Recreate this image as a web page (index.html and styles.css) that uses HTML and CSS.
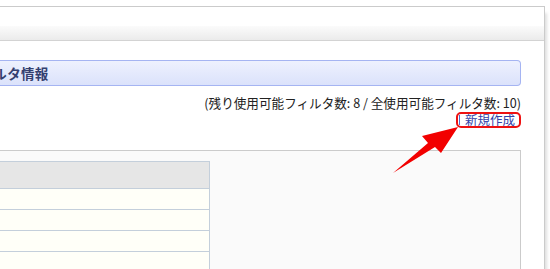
FILE: index.html
```html
<!DOCTYPE html>
<html lang="ja">
<head>
    <meta charset="UTF-8">
    <title>フィルタ情報</title>
    <link rel="stylesheet" href="styles.css">
</head>
<body>
    <div class="frame">
        <div class="topbar"></div>
        <div class="tabbar"></div>
        <div class="content">
            <h2 class="section-title"><span>フィルタ情報</span></h2>
            <p class="count">(残り使用可能フィルタ数: 8 / 全使用可能フィルタ数: 10)</p>
            <p class="actions"><a href="#" class="new-link">新規作成</a></p>
            <div class="panel">
                <table class="filters">
                    <tr class="head"><th></th></tr>
                    <tr><td></td></tr>
                    <tr><td></td></tr>
                    <tr><td></td></tr>
                    <tr><td></td></tr>
                </table>
            </div>
        </div>
    </div>

    <svg class="arrow" width="550" height="269" viewBox="0 0 550 269">
        <polygon points="393,173 428,143 422,136 458,127 441,153 435,147" fill="#f20000"/>
    </svg>
</body>
</html>
```

FILE: styles.css
```css
html, body {
    height: 269px;
    overflow: hidden;
}

body {
    margin: 0;
    background: #fff;
    font-family: "Noto Sans CJK JP", "DejaVu Sans", sans-serif;
    font-size: 13px;
    color: #222;
}

.frame {
    width: 544px;
    height: 262px;
    margin-top: 6px;
    border-top: 1px solid #cbcbcb;
    border-right: 1px solid #cbcbcb;
    box-shadow: 3px 6px 3px -1px rgba(0,0,0,0.13);
    background: #fff;
    overflow: hidden;
}

.topbar {
    height: 19px;
}

.tabbar {
    height: 14px;
    background: linear-gradient(#fbfbfb, #ebebeb);
    border-bottom: 1px solid #d3d3d3;
}

.content {
    padding: 19px 23px 0 0;
}

.section-title {
    margin: 0;
    height: 24px;
    border: 1px solid #a5b4f2;
    border-left: none;
    border-radius: 0 4px 4px 0;
    background: linear-gradient(#eef1fe, #dbe2fb);
    font-size: 13.5px;
    line-height: 24px;
    color: #34406f;
    overflow: hidden;
    white-space: nowrap;
}

.section-title span {
    display: inline-block;
    margin-left: -34px;
    letter-spacing: 0.3px;
}

.count {
    margin: 9px 0 0;
    text-align: right;
    line-height: 15px;
    font-size: 12.6px;
    color: #222;
}

.actions {
    margin: 2px 0 0;
    text-align: right;
    line-height: 14px;
    height: 15px;
}

.new-link {
    position: relative;
    display: inline-block;
    font-size: 12.5px;
    color: #3442a8;
    text-decoration: none;
    line-height: 12px;
    padding: 0 4px 0 7px;
    border: 2px solid #ee1111;
    border-radius: 5px;
}

.new-link::before {
    content: "";
    position: absolute;
    left: 1px;
    top: 1px;
    height: 10px;
    border-left: 1px solid #4a6fd0;
}

.panel {
    margin-top: 23px;
    height: 108px;
    padding-top: 10px;
    background: #fafafa;
    border-top: 1px solid #cbcbcb;
    border-right: 1px solid #cbcbcb;
    overflow: hidden;
}

.filters {
    width: 210px;
    border-collapse: collapse;
}

.filters th,
.filters td {
    padding: 0;
    border: 1px solid #c4cfdb;
    border-left: none;
}

.filters .head th {
    height: 26px;
    background: #e6e6e6;
}

.filters td {
    height: 20px;
    background: #fffff8;
}

.arrow {
    position: absolute;
    left: 0;
    top: 0;
    pointer-events: none;
}
```
